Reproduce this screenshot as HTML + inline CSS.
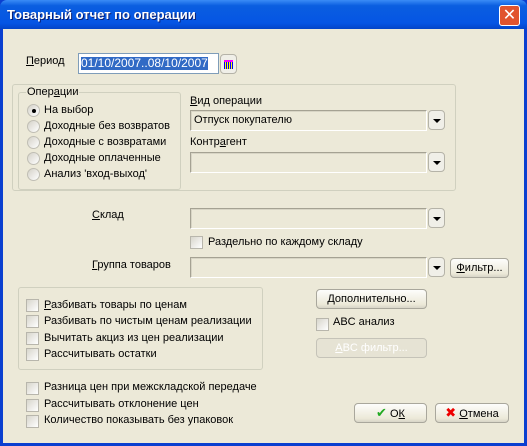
<!DOCTYPE html>
<html><head><meta charset="utf-8"><style>
*{margin:0;padding:0;box-sizing:border-box}
body{width:527px;height:446px;overflow:hidden;background:#0A3FD0;font-family:"Liberation Sans","DejaVu Sans",sans-serif;font-size:11px;color:#000;position:relative}
.a{position:absolute;white-space:nowrap}
#title{left:0;top:0;width:527px;height:29px;background:linear-gradient(#3a8cf6,#0a5ee0 20%,#0555e4 80%,#0344c8);border-radius:7px 7px 0 0}
#title span{position:absolute;left:7px;top:7px;color:#fff;font-weight:bold;font-size:13px;text-shadow:1px 1px #0a1e70}
#close{left:499px;top:5px;width:21px;height:21px;background:#e1542e;border:1px solid #fff;border-radius:3px;color:#fff;font-size:16px;font-weight:bold;text-align:center;line-height:19px}
#body{left:3px;top:29px;width:521px;height:414px;background:#ECE9D8}
.grp{position:absolute;border:1px solid #d0d0bf;border-radius:3px}
.combo{position:absolute;height:21px;background:#ECE9D8;border:1px solid;border-color:#a5a293 #fff #fff #a5a293;box-shadow:inset 1px 1px #d8d5c5;padding:3px 3px;}
.dd{position:absolute;width:17px;height:20px;border:1px solid #b5b3a8;border-radius:4px;background:#f0efe8}
.dd:after{content:"";position:absolute;left:4px;top:8px;border-left:4px solid transparent;border-right:4px solid transparent;border-top:4px solid #000}
.cb{position:absolute;width:13px;height:13px;background:linear-gradient(135deg,#d8d6cc,#fff);border:1px solid #b8b6ac}
.rb{position:absolute;width:13px;height:13px;border-radius:50%;background:linear-gradient(135deg,#d4d2c8,#fff);border:1px solid #c0beb4}
.btn{position:absolute;height:20px;border:1px solid #a9a79c;border-radius:4px;background:linear-gradient(#fdfdfb,#ece9d8 80%,#d8d5c8);text-align:center;line-height:18px}
u{text-decoration:underline}
</style></head><body>
<div id="title" class="a"><span>Товарный отчет по операции</span></div>
<div id="close" class="a">✕</div>
<div id="body" class="a"></div>

<div class="a" style="left:26px;top:55px"><u>П</u>ериод</div>
<div class="a" style="left:78px;top:53px;width:141px;height:21px;background:#fff;border:1px solid #7f9db9;"><span style="position:absolute;left:2px;top:3px;background:#316ac5;color:#fff;line-height:13px;font-size:12px">01/10/2007..08/10/2007</span></div>
<div class="a" style="left:220px;top:54px;width:17px;height:20px;border:1px solid #b5b3a8;border-radius:4px;background:#f0efe8">
<div style="position:absolute;left:3px;top:5px;width:9px;height:9px;background:repeating-linear-gradient(90deg,#00f 0 1px,#ff0 1px 2px);border-top:2px solid #f0f"></div></div>

<div class="grp" style="left:12px;top:84px;width:444px;height:107px"></div>
<div class="grp" style="left:18px;top:92px;width:163px;height:98px"></div>
<div class="a" style="left:26px;top:86px;background:#ECE9D8;padding:0 1px">Опер<u>а</u>ции</div>
<div class="rb" style="left:27px;top:104px"><div style="position:absolute;left:4px;top:4px;width:4px;height:4px;border-radius:50%;background:#000"></div></div>
<div class="a" style="left:44px;top:104px">На выбор</div>
<div class="rb" style="left:27px;top:120px"></div><div class="a" style="left:44px;top:120px">Доходные без возвратов</div>
<div class="rb" style="left:27px;top:136px"></div><div class="a" style="left:44px;top:136px">Доходные с возвратами</div>
<div class="rb" style="left:27px;top:152px"></div><div class="a" style="left:44px;top:152px">Доходные оплаченные</div>
<div class="rb" style="left:27px;top:168px"></div><div class="a" style="left:44px;top:168px">Анализ 'вход-выход'</div>

<div class="a" style="left:190px;top:95px"><u>В</u>ид операции</div>
<div class="combo" style="left:190px;top:110px;width:237px">Отпуск покупателю</div>
<div class="dd" style="left:428px;top:110px"></div>
<div class="a" style="left:190px;top:136px">Контр<u>а</u>гент</div>
<div class="combo" style="left:190px;top:152px;width:237px"></div>
<div class="dd" style="left:428px;top:152px"></div>

<div class="a" style="left:92px;top:209px"><u>С</u>клад</div>
<div class="combo" style="left:190px;top:208px;width:237px"></div>
<div class="dd" style="left:428px;top:208px"></div>
<div class="cb" style="left:190px;top:236px"></div>
<div class="a" style="left:208px;top:236px">Раздельно по каждому складу</div>

<div class="a" style="left:92px;top:259px"><u>Г</u>руппа товаров</div>
<div class="combo" style="left:190px;top:257px;width:237px"></div>
<div class="dd" style="left:428px;top:257px"></div>
<div class="btn" style="left:450px;top:258px;width:59px"><u>Ф</u>ильтр...</div>

<div class="grp" style="left:18px;top:287px;width:245px;height:83px"></div>
<div class="cb" style="left:26px;top:299px"></div><div class="a" style="left:44px;top:299px"><u>Р</u>азбивать товары по ценам</div>
<div class="cb" style="left:26px;top:315px"></div><div class="a" style="left:44px;top:315px">Разбивать по чистым ценам реализации</div>
<div class="cb" style="left:26px;top:332px"></div><div class="a" style="left:44px;top:332px">Вычитать акциз из цен реализации</div>
<div class="cb" style="left:26px;top:348px"></div><div class="a" style="left:44px;top:348px">Рассчитывать остатки</div>

<div class="btn" style="left:316px;top:289px;width:111px">Дополнительно...</div>
<div class="cb" style="left:316px;top:318px"></div><div class="a" style="left:333px;top:316px">ABC анализ</div>
<div class="btn" style="left:316px;top:338px;width:111px;color:#fff;border-color:#c5c3b8;background:#e6e3d4"><u>A</u>BC фильтр...</div>

<div class="cb" style="left:26px;top:382px"></div><div class="a" style="left:44px;top:381px">Разница цен при межскладской передаче</div>
<div class="cb" style="left:26px;top:399px"></div><div class="a" style="left:44px;top:398px">Рассчитывать отклонение цен</div>
<div class="cb" style="left:26px;top:415px"></div><div class="a" style="left:44px;top:414px">Количество показывать без упаковок</div>

<div class="btn" style="left:354px;top:403px;width:73px"><span style="color:#2a2;font-weight:bold;font-size:13px">✔</span> О<u>К</u></div>
<div class="btn" style="left:435px;top:403px;width:74px"><span style="color:#e00;font-weight:bold;font-size:13px">✖</span> <u>О</u>тмена</div>
</body></html>
